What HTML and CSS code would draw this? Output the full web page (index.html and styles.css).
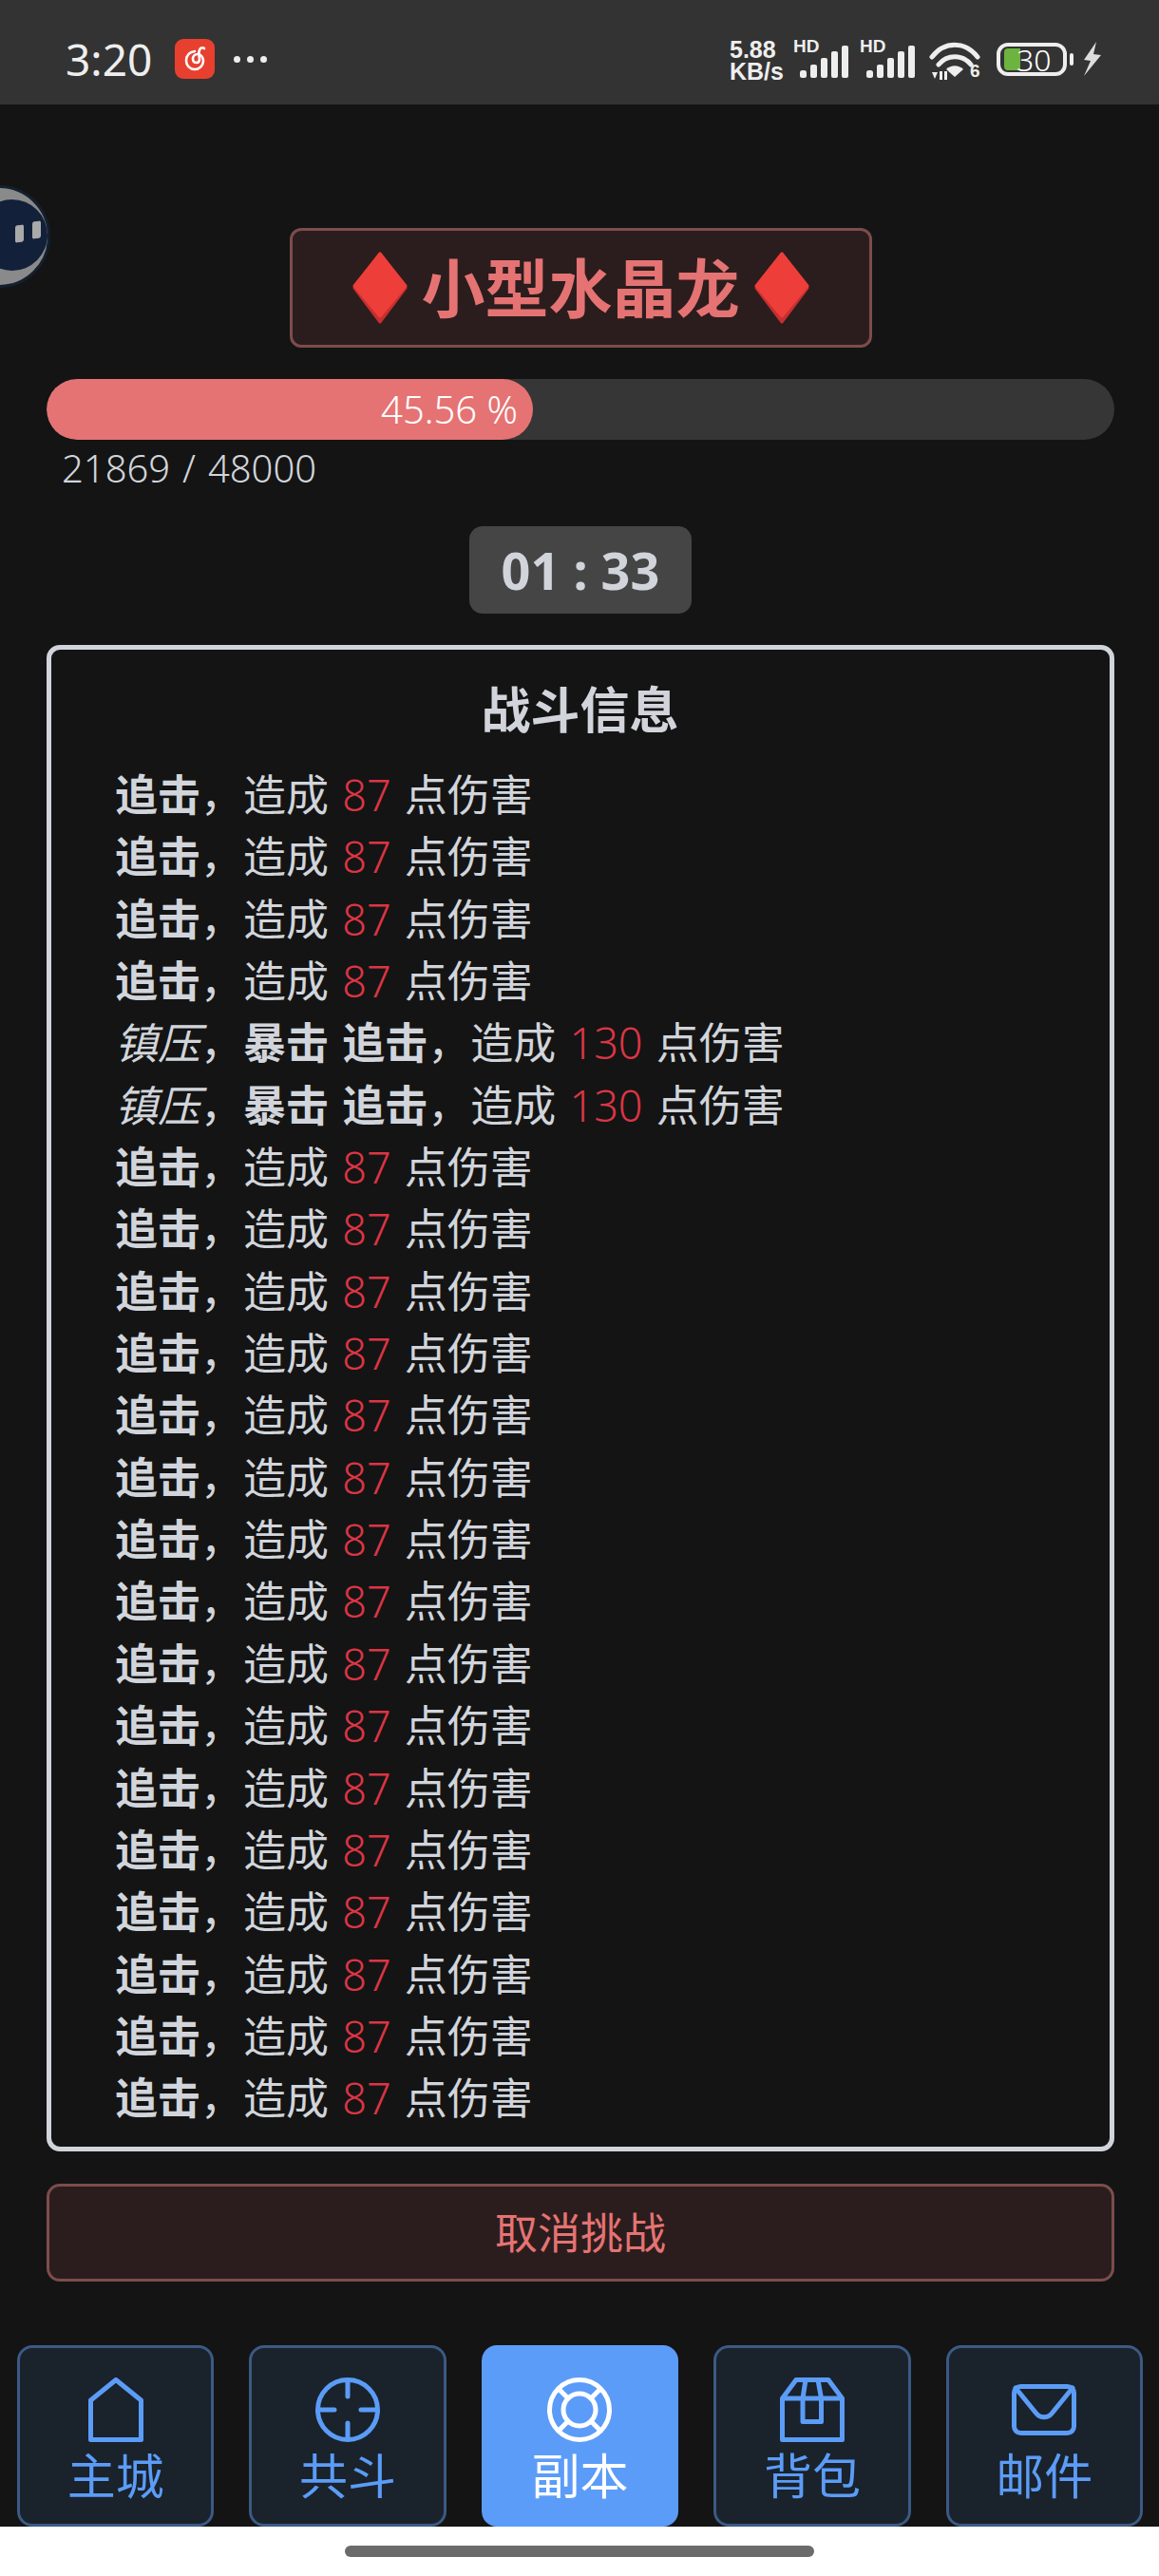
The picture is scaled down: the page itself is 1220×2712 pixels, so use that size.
FILE: index.html
```html
<!DOCTYPE html>
<html lang="zh-CN">
<head>
<meta charset="utf-8">
<title>小型水晶龙</title>
<link rel="stylesheet" href="styles.css">
</head>
<body>
<div class="phone">
  <header class="status">
    <div class="status-left">
      <span class="clock">3:20</span>
      <span class="app-icon">
        <svg width="42" height="42" viewBox="0 0 42 42"><rect width="42" height="42" rx="9" fill="#e8402f"/><path d="M21 13c-6 1-9 5-9 10 0 5 4 9 9 9s9-4 9-9c0-4-3-7-6-7-3 0-5 2-5 5s2 4 4 4 3-2 3-4c-1-5-1-9 1-11 1-1 3-1 4 0" fill="none" stroke="#fff" stroke-width="2.6" stroke-linecap="round"/></svg>
      </span>
      <span class="dots"><i></i><i></i><i></i></span>
    </div>
    <div class="status-right">
      <span class="speed"><span>5.88</span><span>KB/s</span></span>
      <span class="signal"><b>HD</b>
        <svg width="52" height="36" viewBox="0 0 52 36"><g fill="#eee"><rect x="0" y="26" width="7" height="8" rx="2.5"/><rect x="11" y="20" width="7" height="14" rx="2"/><rect x="22" y="13" width="7" height="21" rx="2"/><rect x="33" y="6" width="7" height="28" rx="2"/><rect x="44" y="0" width="7" height="34" rx="2"/></g></svg>
      </span>
      <span class="signal"><b>HD</b>
        <svg width="52" height="36" viewBox="0 0 52 36"><g fill="#eee"><rect x="0" y="26" width="7" height="8" rx="2.5"/><rect x="11" y="20" width="7" height="14" rx="2"/><rect x="22" y="13" width="7" height="21" rx="2"/><rect x="33" y="6" width="7" height="28" rx="2"/><rect x="44" y="0" width="7" height="34" rx="2"/></g></svg>
      </span>
      <span class="wifi">
        <svg width="54" height="42" viewBox="0 0 54 42"><g fill="none" stroke="#eee" stroke-width="5" stroke-linecap="round"><path d="M3 17C16 0 38 0 51 17"/><path d="M10 25C19 14 35 14 44 25"/></g><path d="M18 30c5-5 13-5 18 0l-9 8z" fill="#eee"/><path d="M3 33h6l-3 7zM11 32h3v9h-3zM16 32h3v9h-3z" fill="#eee"/></svg>
        <span class="wifi-six">6</span>
      </span>
      <span class="battery"><span class="battery-fill"></span><span class="battery-num">30</span></span>
      <span class="battery-cap"></span>
      <svg class="bolt" width="21" height="36" viewBox="0 0 21 36"><path d="M15 0 2 19l7 1-7 16L20 14l-8-1z" fill="#ddd"/></svg>
    </div>
  </header>

  <div class="floater"><div class="floater-face"><i></i><i></i></div></div>

  <main class="main">
    <div class="title-row">
      <h1 class="boss">
        <svg width="58" height="76" viewBox="0 0 58 76"><path d="M29 2 56 38 29 74 2 38z" fill="#c62f2f" stroke="#c62f2f" stroke-width="3" stroke-linejoin="round"/><path d="M29 2 56 36 29 68 2 36z" fill="#ee3e3a" stroke="#ee3e3a" stroke-width="3" stroke-linejoin="round"/></svg>
        <span>小型水晶龙</span>
        <svg width="58" height="76" viewBox="0 0 58 76"><path d="M29 2 56 38 29 74 2 38z" fill="#c62f2f" stroke="#c62f2f" stroke-width="3" stroke-linejoin="round"/><path d="M29 2 56 36 29 68 2 36z" fill="#ee3e3a" stroke="#ee3e3a" stroke-width="3" stroke-linejoin="round"/></svg>
      </h1>
    </div>

    <div class="bar"><div class="bar-fill" style="width:45.56%">45.56 %</div></div>
    <div class="hp">21869 / 48000</div>

    <div class="timer-row"><div class="timer">01 : 33</div></div>

    <section class="battle">
      <h2 class="battle-title">战斗信息</h2>
      <ul class="log">
        <li><strong>追击</strong>，造成 <span class="dmg">87</span> 点伤害</li>
        <li><strong>追击</strong>，造成 <span class="dmg">87</span> 点伤害</li>
        <li><strong>追击</strong>，造成 <span class="dmg">87</span> 点伤害</li>
        <li><strong>追击</strong>，造成 <span class="dmg">87</span> 点伤害</li>
        <li><em>镇压</em>，<strong>暴击 追击</strong>，造成 <span class="dmg">130</span> 点伤害</li>
        <li><em>镇压</em>，<strong>暴击 追击</strong>，造成 <span class="dmg">130</span> 点伤害</li>
        <li><strong>追击</strong>，造成 <span class="dmg">87</span> 点伤害</li>
        <li><strong>追击</strong>，造成 <span class="dmg">87</span> 点伤害</li>
        <li><strong>追击</strong>，造成 <span class="dmg">87</span> 点伤害</li>
        <li><strong>追击</strong>，造成 <span class="dmg">87</span> 点伤害</li>
        <li><strong>追击</strong>，造成 <span class="dmg">87</span> 点伤害</li>
        <li><strong>追击</strong>，造成 <span class="dmg">87</span> 点伤害</li>
        <li><strong>追击</strong>，造成 <span class="dmg">87</span> 点伤害</li>
        <li><strong>追击</strong>，造成 <span class="dmg">87</span> 点伤害</li>
        <li><strong>追击</strong>，造成 <span class="dmg">87</span> 点伤害</li>
        <li><strong>追击</strong>，造成 <span class="dmg">87</span> 点伤害</li>
        <li><strong>追击</strong>，造成 <span class="dmg">87</span> 点伤害</li>
        <li><strong>追击</strong>，造成 <span class="dmg">87</span> 点伤害</li>
        <li><strong>追击</strong>，造成 <span class="dmg">87</span> 点伤害</li>
        <li><strong>追击</strong>，造成 <span class="dmg">87</span> 点伤害</li>
        <li><strong>追击</strong>，造成 <span class="dmg">87</span> 点伤害</li>
        <li><strong>追击</strong>，造成 <span class="dmg">87</span> 点伤害</li>
      </ul>
    </section>

    <button class="cancel" type="button">取消挑战</button>
  </main>

  <nav class="tabs">
    <a class="tab">
      <svg class="tab-icon" viewBox="0 0 68 68"><path d="M7.500 65.500V24L34 2.500 60.500 24V65.500Z"/></svg>
      <span>主城</span>
    </a>
    <a class="tab">
      <svg class="tab-icon" viewBox="0 0 68 68"><circle cx="34" cy="34" r="31.500"/><path d="M34 3V20M34 48V65M3 34H20M48 34H65"/></svg>
      <span>共斗</span>
    </a>
    <a class="tab tab-active">
      <svg class="tab-icon" viewBox="0 0 68 68"><circle cx="34" cy="34" r="31.500"/><circle cx="34" cy="34" r="17"/><path d="M12 12 22 22M56 12 46 22M12 56 22 46M56 56 46 46"/></svg>
      <span>副本</span>
    </a>
    <a class="tab">
      <svg class="tab-icon" viewBox="0 0 68 68"><path d="M2.500 22V65.500H65.500V22L51 2.500H17ZM2.500 22H65.500M27 2.500 24 22V46.500H43.500V22L40 2.500"/></svg>
      <span>背包</span>
    </a>
    <a class="tab">
      <svg class="tab-icon" viewBox="0 0 68 68"><rect x="2.500" y="9.500" width="63" height="49" rx="7"/><path d="M4 11 26 38C30 43 38 43 42 38L64 11"/></svg>
      <span>邮件</span>
    </a>
  </nav>

  <div class="home-area"><div class="home-bar"></div></div>
</div>
</body>
</html>
```

FILE: styles.css
```css
* { box-sizing: border-box; }
html, body { margin: 0; padding: 0; }
body {
  background: #141414;
  color: #d1d5db;
  font-family: "Noto Sans", "Noto Sans CJK SC", sans-serif;
  font-weight: 300;
}
.phone { position: relative; width: 1220px; height: 2712px; overflow: hidden; background: #141414; }

.status {
  height: 110px;
  background: #333;
  display: flex;
  justify-content: space-between;
  align-items: center;
  padding: 14px 60px 0 69px;
  color: #eee;
}
.status-left { display: flex; align-items: center; }
.clock { font-size: 46px; font-weight: 400; line-height: 1; width: 115px; }
.app-icon { display: block; width: 42px; height: 42px; }
.app-icon svg { display: block; }
.dots { display: flex; gap: 7px; margin-left: 20px; }
.dots i { display: block; width: 7px; height: 7px; border-radius: 50%; background: #eee; }

.status-right { display: flex; align-items: center; height: 96px; }
.speed { display: flex; flex-direction: column; font-family: "Liberation Sans", sans-serif; font-weight: 700; font-size: 25px; line-height: 23px; width: 67px; margin-top: 4px; }
.signal { position: relative; display: block; width: 70px; height: 40px; margin-top: 6px; }
.signal b { position: absolute; left: 0; top: -6px; font-family: "Liberation Sans", sans-serif; font-size: 19px; line-height: 19px; font-weight: 700; }
.signal svg { position: absolute; left: 7px; top: 3px; }
.wifi { position: relative; display: block; width: 71px; margin-left: 3px; height: 42px; margin-top: 3px; }
.wifi svg { display: block; }
.wifi-six { position: absolute; left: 43px; top: 21px; font-family: "Liberation Sans", sans-serif; font-weight: 700; font-size: 19px; line-height: 22px; color: #eee; }
.battery {
  position: relative;
  display: block;
  width: 74px;
  height: 35px;
  border: 4px solid #eee;
  border-radius: 12px;
}
.battery-fill { position: absolute; left: 4px; top: 2px; width: 17px; height: 23px; background: #6cb33f; border-radius: 4px 0 0 4px; }
.battery-num { position: absolute; left: 17px; top: -4px; font-size: 32px; line-height: 35px; color: #fff; font-weight: 300; }
.battery-cap { display: block; width: 4px; height: 13px; margin-left: 3px; background: #eee; border-radius: 2px; }
.bolt { display: block; margin-left: 9px; }

.floater {
  position: absolute;
  left: -55px;
  top: 195px;
  width: 108px;
  height: 108px;
  border-radius: 50%;
  background: #8a8a8a;
  border: 3px solid #14202f;
}
.floater-face {
  position: absolute;
  left: 27px;
  top: 12px;
  width: 75px;
  height: 75px;
  border-radius: 50%;
  background: #12203a;
}
.floater-face i { position: absolute; display: block; width: 9px; height: 18px; background: #a9a9a9; border-radius: 2px; transform: skewY(-8deg); }
.floater-face i:first-child { left: 41px; top: 27px; }
.floater-face i:last-child { left: 59px; top: 23px; }

.main { padding: 130px 47px 0 49px; }
.title-row { display: flex; justify-content: center; }
.boss {
  margin: 0;
  width: 613px;
  height: 126px;
  display: flex;
  align-items: center;
  justify-content: center;
  gap: 15px;
  background: #2b1d1d;
  border: 3px solid #7d4c4c;
  border-radius: 12px;
  color: #e57373;
  font-size: 67px;
  line-height: 1;
  font-weight: 700;
}
.boss svg { flex: none; display: block; }

.bar { margin-top: 33px; height: 64px; background: #363636; border-radius: 32px; overflow: hidden; }
.bar-fill {
  height: 64px;
  background: #e57373;
  border-radius: 32px;
  color: #fff;
  font-size: 40px;
  line-height: 64px;
  text-align: right;
  padding-right: 16px;
}
.hp { height: 58px; padding-left: 16px; font-size: 40px; line-height: 58px; padding-top: 1px; word-spacing: 2.5px; }

.timer-row { display: flex; justify-content: center; margin-top: 33px; }
.timer {
  width: 234px;
  height: 92px;
  background: #454545;
  border-radius: 14px;
  text-align: center;
  font-size: 54px;
  line-height: 92px;
  font-weight: 700;
}

.battle {
  margin-top: 33px;
  height: 1586px;
  border: 5px solid #d1d5db;
  border-radius: 14px;
  padding: 25px 68px 0 67px;
}
.battle-title { margin: 0 0 19px; font-size: 52px; line-height: 76px; font-weight: 700; text-align: center; }
.log { list-style: none; margin: 0; padding: 0; font-size: 45px; line-height: 65.35px; font-weight: 400; word-spacing: 2.5px; }
.log li { white-space: nowrap; height: 65.35px; }
.log strong { font-weight: 700; }
.log em { font-style: italic; }
.dmg { color: #dc3545; font-weight: 300; }

.cancel {
  display: block;
  width: 100%;
  margin-top: 34px;
  height: 103px;
  padding: 0 0 5px;
  background: #2b1d1d;
  border: 3px solid #7d4c4c;
  border-radius: 14px;
  color: #e57373;
  font: inherit;
  font-size: 45px;
  font-weight: 400;
}

.tabs {
  margin-top: 67px;
  padding: 0 17px 0 18px;
  display: grid;
  grid-template-columns: repeat(5, 1fr);
  gap: 37px;
}
.tab {
  height: 191px;
  display: flex;
  flex-direction: column;
  align-items: center;
  padding-top: 31px;
  background: #1a222c;
  border: 3px solid #3b5a85;
  border-radius: 16px;
  color: #5b9cf6;
  font-size: 51px;
  line-height: 64px;
  font-weight: 400;
}
.tab-icon { display: block; width: 68px; height: 68px; fill: none; stroke: currentColor; stroke-width: 5; stroke-linejoin: round; stroke-linecap: round; margin-bottom: 3px; }
.tab-active { background: #5b9cf8; border-color: #5b9cf8; color: #fff; }

.home-area { height: 52px; padding-top: 20px; background: #fff; }
.home-bar { width: 494px; height: 12px; margin-left: 363px; background: #6b6b6b; border-radius: 6px; }
```
